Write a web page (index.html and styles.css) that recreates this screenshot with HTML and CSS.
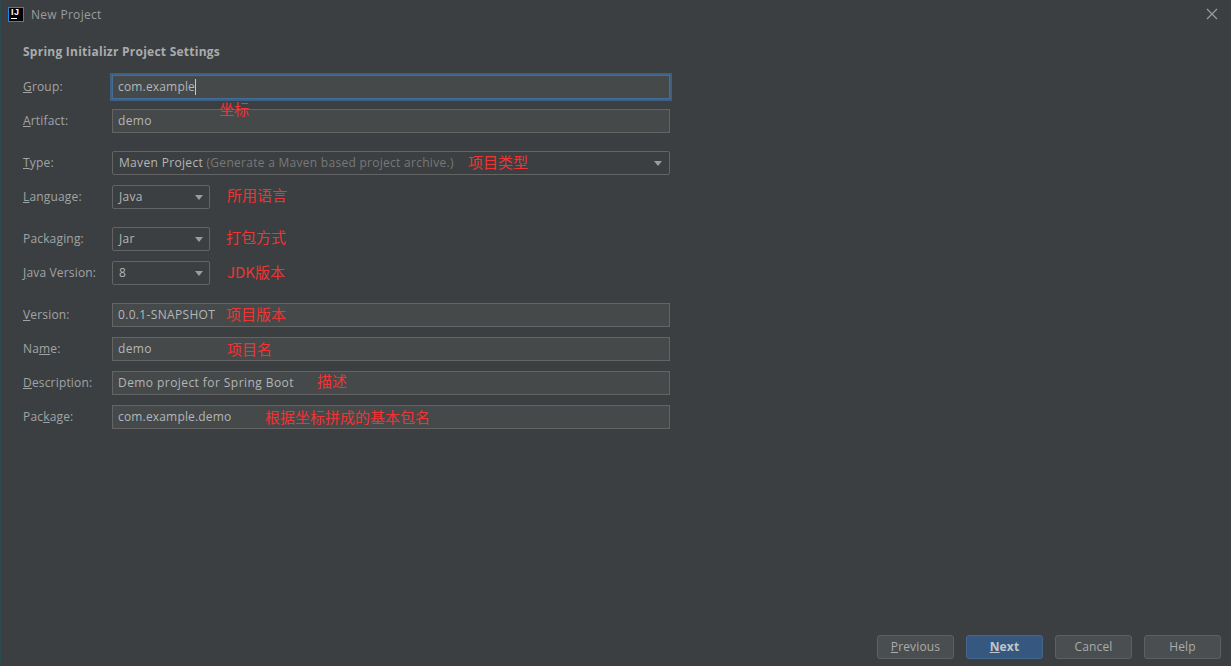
FILE: index.html
```html
<!DOCTYPE html>
<html lang="en">
<head>
<meta charset="utf-8">
<title>New Project</title>
<link rel="stylesheet" href="styles.css">
</head>
<body>
<div class="window">
  <header class="titlebar">
    <div class="logo"><span class="logo-text">IJ</span><span class="logo-bar"></span></div>
    <span class="title">New Project</span>
    <svg class="close" width="12" height="12" viewBox="0 0 12 12"><path d="M1 1 L11 11 M11 1 L1 11" stroke="#9a9c9d" stroke-width="1.2" fill="none"/></svg>
  </header>
  <main class="content">
    <h1 class="heading">Spring Initializr Project Settings</h1>
    <div class="group">
      <div class="row"><label class="label"><u>G</u>roup:</label><div class="field focused tight">com.example<i class="caret"></i></div></div>
      <div class="row"><label class="label"><u>A</u>rtifact:</label><div class="field">demo</div></div>
    </div>
    <div class="group">
      <div class="row"><label class="label"><u>T</u>ype:</label><div class="select wide"><span class="val">Maven Project <span class="hint">(Generate a Maven based project archive.)</span></span><i class="arrow"></i></div></div>
      <div class="row"><label class="label"><u>L</u>anguage:</label><div class="select"><span class="val">Java</span><i class="arrow"></i></div></div>
    </div>
    <div class="group">
      <div class="row"><label class="label">Packa<u>g</u>ing:</label><div class="select"><span class="val">Jar</span><i class="arrow"></i></div></div>
      <div class="row"><label class="label"><u>J</u>ava Version:</label><div class="select"><span class="val">8</span><i class="arrow"></i></div></div>
    </div>
    <div class="group">
      <div class="row"><label class="label"><u>V</u>ersion:</label><div class="field">0.0.1-SNAPSHOT</div></div>
      <div class="row"><label class="label">Na<u>m</u>e:</label><div class="field">demo</div></div>
      <div class="row"><label class="label"><u>D</u>escription:</label><div class="field loose">Demo project for Spring Boot</div></div>
      <div class="row"><label class="label">Pac<u>k</u>age:</label><div class="field tight">com.example.demo</div></div>
    </div>
  </main>
  <footer class="actions">
    <button class="btn"><u>P</u>revious</button>
    <button class="btn primary"><u>N</u>ext</button>
    <button class="btn">Cancel</button>
    <button class="btn">Help</button>
  </footer>
  <span class="note n1">坐标</span>
  <span class="note n2">项目类型</span>
  <span class="note n3">所用语言</span>
  <span class="note n4">打包方式</span>
  <span class="note n5">JDK版本</span>
  <span class="note n6">项目版本</span>
  <span class="note n7">项目名</span>
  <span class="note n8">描述</span>
  <span class="note n9">根据坐标拼成的基本包名</span>
</div>
</body>
</html>
```

FILE: styles.css
```css
* { box-sizing: border-box; }
html, body { margin: 0; padding: 0; }
body { background: #3c3f41; }
.window {
  position: relative;
  width: 1231px;
  height: 666px;
  display: flex;
  flex-direction: column;
  background: #3c3f41;
  border-left: 1px solid #2a4a50;
  color: #a9acad;
  font-family: "Open Sans", "Noto Sans", sans-serif;
  font-size: 12px;
  overflow: hidden;
}
.titlebar {
  height: 28px;
  flex: none;
  display: flex;
  align-items: center;
  padding: 0 13px 0 7px;
}
.logo {
  position: relative;
  width: 16px;
  height: 15px;
  background: #000;
  border: 1px solid #1e88e5;
  margin-right: 7px;
}
.logo-text {
  position: absolute;
  left: 2px;
  top: -1px;
  color: #fff;
  font: bold 9px/10px "Liberation Sans", sans-serif;
  letter-spacing: 0.5px;
}
.logo-bar {
  position: absolute;
  left: 2px;
  top: 10px;
  width: 6px;
  height: 1px;
  background: #fff;
}
.title { color: #9a9d9f; font-size: 12px; letter-spacing: 0.3px; flex: 1; }
.close { flex: none; }
.content {
  flex: 1;
  padding: 15px 0 0 22px;
}
.heading {
  margin: 0 0 15px;
  font-size: 12px;
  line-height: 17px;
  font-weight: 700;
  letter-spacing: 0.25px;
  color: #a9acad;
}
.group {
  display: flex;
  flex-direction: column;
  gap: 10px;
  margin-bottom: 18px;
}
.row { display: flex; align-items: center; height: 24px; }
.label { width: 89px; flex: none; color: #a0a4a6; letter-spacing: 0.17px; padding-bottom: 1px; }
.field, .select {
  height: 24px;
  display: flex;
  align-items: center;
  border: 1px solid #646464;
  color: #b4b6b7;
  letter-spacing: 0.33px;
  padding-bottom: 1px;
}
.field {
  width: 558px;
  background: #45494a;
  padding-left: 5px;
}
.field.tight { letter-spacing: 0.17px; }
.field.loose { letter-spacing: 0.43px; }
.focused {
  border-color: #466d94;
  box-shadow: 0 0 0 2px #3d6185;
}
.caret {
  display: inline-block;
  width: 1px;
  height: 16px;
  background: #c8c8c8;
}
.select {
  width: 98px;
  border-radius: 2px;
  padding: 0 6px 1px 6px;
  justify-content: space-between;
  background: #3c3f41;
}
.select.wide { width: 558px; padding-right: 7px; }
.hint { color: #787878; letter-spacing: 0.28px; }
.arrow {
  width: 0;
  height: 0;
  margin-top: 1px;
  border-left: 4.5px solid transparent;
  border-right: 4.5px solid transparent;
  border-top: 5px solid #9a9d9f;
}
.actions {
  flex: none;
  display: flex;
  justify-content: flex-end;
  gap: 12px;
  padding: 0 10px 7px 0;
}
.btn {
  width: 77px;
  height: 24px;
  padding: 0 0 1px;
  border: 1px solid #5e6060;
  border-radius: 3px;
  background: #4b4e50;
  color: #a9acad;
  font: inherit;
  letter-spacing: 0.15px;
}
.btn.primary {
  background: #365880;
  border-color: #43688c;
  color: #c2c6c9;
  font-weight: 700;
}
.note {
  position: absolute;
  color: #f03333;
  font-family: "Noto Sans CJK SC", sans-serif;
  font-size: 15px;
  line-height: 20px;
  white-space: nowrap;
}
.n1 { left: 218px; top: 99px; }
.n2 { left: 467px; top: 152px; }
.n3 { left: 226px; top: 185px; }
.n4 { left: 225px; top: 227px; }
.n5 { left: 226px; top: 262px; }
.n6 { left: 225px; top: 304px; }
.n7 { left: 226px; top: 339px; }
.n8 { left: 316px; top: 371px; }
.n9 { left: 264px; top: 407px; }
```
